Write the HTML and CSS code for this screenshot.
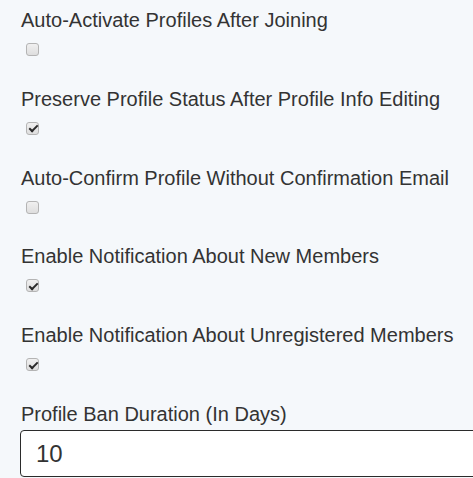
FILE: index.html
```html
<!DOCTYPE html>
<html>
<head>
<meta charset="utf-8">
<link rel="stylesheet" href="styles.css">
</head>
<body>
<div class="form">
  <div class="group">
    <label class="label">Auto-Activate Profiles After Joining</label>
    <span class="check"></span>
  </div>
  <div class="group">
    <label class="label">Preserve Profile Status After Profile Info Editing</label>
    <span class="check checked"></span>
  </div>
  <div class="group">
    <label class="label">Auto-Confirm Profile Without Confirmation Email</label>
    <span class="check"></span>
  </div>
  <div class="group">
    <label class="label">Enable Notification About New Members</label>
    <span class="check checked"></span>
  </div>
  <div class="group">
    <label class="label">Enable Notification About Unregistered Members</label>
    <span class="check checked"></span>
  </div>
  <div class="group last">
    <label class="label">Profile Ban Duration (In Days)</label>
    <div class="input">10</div>
  </div>
</div>
</body>
</html>
```
FILE: styles.css
```css
html, body {
  margin: 0;
  padding: 0;
  background: #f5f8fb;
}
body {
  font-family: "Liberation Sans", Arial, sans-serif;
  color: #333333;
  overflow: hidden;
  height: 478px;
}
.form {
  padding: 6px 0 0 21px;
}
.group {
  display: flex;
  flex-direction: column;
  align-items: flex-start;
  padding-bottom: 27.8px;
}
.label {
  display: block;
  font-size: 20px;
  line-height: 28px;
  margin-bottom: 9px;
  white-space: nowrap;
}
.check {
  display: block;
  box-sizing: border-box;
  width: 13px;
  height: 13px;
  margin-left: 5px;
  margin-bottom: 1px;
  border: 1px solid #b4b4b4;
  border-radius: 3px;
  background: linear-gradient(#f0f0f0, #dedede);
  position: relative;
}
.check.checked::after {
  content: "";
  position: absolute;
  left: 3.5px;
  top: 0.5px;
  width: 3px;
  height: 7px;
  border: solid #2a2a2a;
  border-width: 0 2px 2px 0;
  transform: rotate(45deg);
}
.group.last .label {
  margin-bottom: 2px;
}
.input {
  box-sizing: border-box;
  width: 470px;
  height: 47px;
  margin-left: -1px;
  border: 1px solid #2b2b2b;
  border-radius: 4px;
  background: #ffffff;
  font-size: 24px;
  line-height: 45px;
  padding-left: 15px;
}
```
